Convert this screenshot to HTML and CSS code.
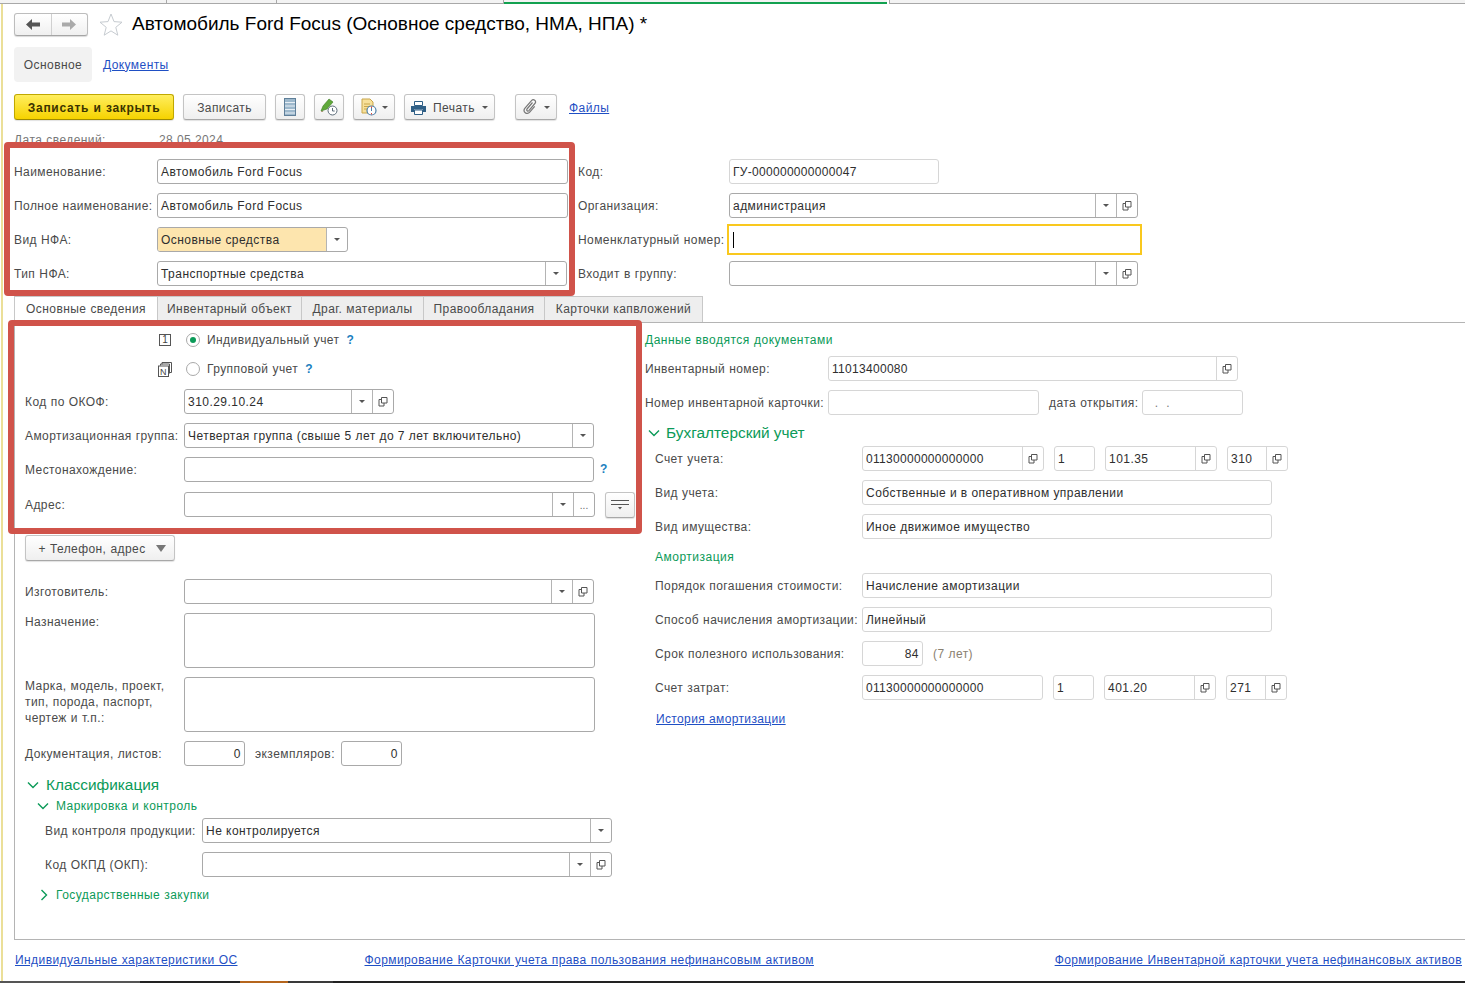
FILE: index.html
```html
<!DOCTYPE html>
<html>
<head>
    <meta charset="UTF-8">
    <title>Автомобиль Ford Focus</title>
    <link rel="stylesheet" href="styles.css">
</head>
<body>
    <svg class="defs" width="0" height="0">
        <symbol id="open" viewBox="0 0 10 10">
            <path d="M3.5 .5h5.500v5.500h-5.500z M3.500 2.500H1v6.500h5V6" fill="none" stroke="#555" stroke-width="1"/>
        </symbol>
        <symbol id="chev-down" viewBox="0 0 12 8">
            <path d="M1 1.500l5 5 5-5" fill="none" stroke="#0b9a58" stroke-width="1.400"/>
        </symbol>
        <symbol id="chev-right" viewBox="0 0 8 12">
            <path d="M1.500 1l5 5-5 5" fill="none" stroke="#0b9a58" stroke-width="1.400"/>
        </symbol>
    </svg>

    <div class="top-strip">
        <span class="strip-seg s1"></span>
        <span class="strip-seg s2"></span>
        <span class="strip-seg s3"></span>
        <span class="strip-seg s4"></span>
    </div>

    <div class="page">
        <div class="head">
            <div class="nav-btns">
                <span class="nav-btn">
                    <svg width="14" height="11" viewBox="0 0 14 11"><path d="M6 0v3.500h8v4H6V11L0 5.500z" fill="#555"/></svg>
                </span>
                <span class="nav-btn">
                    <svg width="14" height="11" viewBox="0 0 14 11"><path d="M8 0v3.500H0v4h8V11l6-5.500z" fill="#aaa"/></svg>
                </span>
            </div>
            <svg class="star" width="24" height="23" viewBox="0 0 24 23"><path d="M12 1l3 7.600 8 .6-6.200 5.100 2 7.900L12 17.900l-6.800 4.300 2-7.900L1 9.200l8-.6z" fill="#fff" stroke="#c6cbd0"/></svg>
            <h1>Автомобиль Ford Focus (Основное средство, НМА, НПА) *</h1>
        </div>

        <div class="sections">
            <span class="section-current">Основное</span>
            <a class="link">Документы</a>
        </div>

        <div class="toolbar">
            <button class="btn btn-main">Записать и закрыть</button>
            <button class="btn btn-write">Записать</button>
            <button class="btn btn-icon">
                <svg width="12" height="18" viewBox="0 0 12 18"><rect x=".5" y=".5" width="11" height="17" fill="#9db8cc" stroke="#5f7f99"/><path d="M1 4.500h10M1 8h10M1 11.500h10M1 15h10" stroke="#e8eff5" stroke-width="1"/></svg>
            </button>
            <button class="btn btn-icon">
                <svg width="18" height="18" viewBox="0 0 18 18"><path d="M1 13l2-5 6-7 4 3-6 7z" fill="#5fa83a" stroke="#3d7a22" stroke-width=".6"/><path d="M1 13l1 1 1.500-1" fill="#8a6a3a"/><circle cx="12.500" cy="12.500" r="4.500" fill="#fff" stroke="#5b6b78"/><path d="M12.500 10v3h2.200" fill="none" stroke="#5b6b78"/></svg>
            </button>
            <button class="btn btn-drop">
                <svg width="16" height="18" viewBox="0 0 16 18"><path d="M1 1h8l3 3v11H1z" fill="#f7e09a" stroke="#c9a64a"/><path d="M3 6h6M3 8.500h5M3 11h4" stroke="#c9a64a"/><circle cx="10.500" cy="12.500" r="4.500" fill="#fff" stroke="#4d7fa8" stroke-width="1.200"/><path d="M10.500 8.500v1.500M10.500 15v1.500" stroke="#d8463c"/><path d="M10.500 10v3" stroke="#4d7fa8"/></svg>
                <span class="arrow"></span>
            </button>
            <button class="btn btn-print">
                <svg width="15" height="14" viewBox="0 0 15 14"><path d="M3.500 .5h8v4h-8z" fill="#fff" stroke="#2f5f86"/><path d="M0 5h15v6h-3V8.500H3V11H0z" fill="#2f5f86"/><path d="M3.500 9h8v4.500h-8z" fill="#fff" stroke="#2f5f86"/></svg>
                <span>Печать</span>
                <span class="arrow"></span>
            </button>
            <button class="btn btn-clip">
                <svg width="14" height="16" viewBox="0 0 14 16"><path d="M9.500 3.500L4 10c-1 1.300 .8 2.800 1.900 1.600l6-7.100c2-2.400-1.400-5.200-3.400-2.900L2 9.200c-2.800 3.300 1.900 7.300 4.700 4l5-5.900" fill="none" stroke="#777" stroke-width="1.200"/></svg>
                <span class="arrow"></span>
            </button>
            <a class="link files-link">Файлы</a>
        </div>

        <div class="date-row">
            <span class="date-label">Дата сведений:</span>
            <span>28.05.2024</span>
        </div>

        <div class="top-form">
            <div class="form-col col-main">
                <div class="row">
                    <span class="label">Наименование:</span>
                    <div class="field w-411"><span class="val">Автомобиль Ford Focus</span></div>
                </div>
                <div class="row">
                    <span class="label">Полное наименование:</span>
                    <div class="field w-411"><span class="val">Автомобиль Ford Focus</span></div>
                </div>
                <div class="row">
                    <span class="label">Вид НФА:</span>
                    <div class="field w-191"><span class="val val-mark">Основные средства</span><span class="fbtn"><i class="arrow"></i></span></div>
                </div>
                <div class="row">
                    <span class="label">Тип НФА:</span>
                    <div class="field w-410"><span class="val">Транспортные средства</span><span class="fbtn"><i class="arrow"></i></span></div>
                </div>
            </div>
            <div class="form-col col-org">
                <div class="row">
                    <span class="label">Код:</span>
                    <div class="field field-ro w-210"><span class="val val-digits">ГУ-000000000000047</span></div>
                </div>
                <div class="row">
                    <span class="label">Организация:</span>
                    <div class="field w-409"><span class="val">администрация</span><span class="fbtn"><i class="arrow"></i></span><span class="fbtn"><svg class="ico-open"><use href="#open"/></svg></span></div>
                </div>
                <div class="row">
                    <span class="label">Номенклатурный номер:</span>
                    <div class="field field-focus"><span class="caret"></span></div>
                </div>
                <div class="row">
                    <span class="label">Входит в группу:</span>
                    <div class="field w-409"><span class="val"></span><span class="fbtn"><i class="arrow"></i></span><span class="fbtn"><svg class="ico-open"><use href="#open"/></svg></span></div>
                </div>
            </div>
        </div>

        <div class="tabs">
            <span class="tab tab-active t1">Основные сведения</span>
            <span class="tab t2">Инвентарный объект</span>
            <span class="tab t3">Драг. материалы</span>
            <span class="tab t4">Правообладания</span>
            <span class="tab t5">Карточки капвложений</span>
        </div>

        <div class="panel">
            <div class="panel-left">
                <div class="row row-radio">
                    <span class="mode-ico"><span class="box-one">1</span></span>
                    <span class="radio radio-on"></span>
                    <span class="radio-text">Индивидуальный учет</span>
                    <span class="hint hint-one">?</span>
                </div>
                <div class="row row-radio">
                    <span class="mode-ico">
                        <svg class="ico-group" width="14" height="15" viewBox="0 0 14 15"><path d="M4 2.500V.5h9.500v10h-1.500M2.500 3.500V2h9v9.500" fill="none" stroke="#555"/><rect x=".5" y="4" width="10" height="10.500" fill="#fff" stroke="#555"/><text x="5.500" y="12.500" font-size="9" text-anchor="middle" fill="#444" font-family="Liberation Sans, sans-serif">N</text></svg>
                    </span>
                    <span class="radio"></span>
                    <span class="radio-text">Групповой учет</span>
                    <span class="hint">?</span>
                </div>
                <div class="row row-okof">
                    <span class="label">Код по ОКОФ:</span>
                    <div class="field w-210"><span class="val">310.29.10.24</span><span class="fbtn"><i class="arrow"></i></span><span class="fbtn"><svg class="ico-open"><use href="#open"/></svg></span></div>
                </div>
                <div class="row">
                    <span class="label">Амортизационная группа:</span>
                    <div class="field w-410"><span class="val">Четвертая группа (свыше 5 лет до 7 лет включительно)</span><span class="fbtn"><i class="arrow"></i></span></div>
                </div>
                <div class="row">
                    <span class="label">Местонахождение:</span>
                    <div class="field w-410"><span class="val"></span></div>
                    <span class="hint hint-place">?</span>
                </div>
                <div class="row row-address">
                    <span class="label">Адрес:</span>
                    <div class="field w-411"><span class="val"></span><span class="fbtn"><i class="arrow"></i></span><span class="fbtn fbtn-dots">...</span></div>
                    <button class="btn btn-filter">
                        <svg width="18" height="11" viewBox="0 0 18 11"><path d="M0 1.500h18M0 5.500h18" stroke="#555"/><path d="M7 8h4L9 10.500z" fill="#555"/></svg>
                    </button>
                </div>
                <button class="btn btn-phone">+ Телефон, адрес<span class="arrow arrow-big"></span></button>
                <div class="row row-maker">
                    <span class="label">Изготовитель:</span>
                    <div class="field w-410"><span class="val"></span><span class="fbtn"><i class="arrow"></i></span><span class="fbtn"><svg class="ico-open"><use href="#open"/></svg></span></div>
                </div>
                <div class="row row-text">
                    <span class="label label-top">Назначение:</span>
                    <div class="field field-area w-411"></div>
                </div>
                <div class="row row-text">
                    <span class="label label-top">Марка, модель, проект,<br>тип, порода, паспорт,<br>чертеж и т.п.:</span>
                    <div class="field field-area w-411"></div>
                </div>
                <div class="row">
                    <span class="label">Документация, листов:</span>
                    <div class="field w-61"><span class="val val-num">0</span></div>
                    <span class="label-inline">экземпляров:</span>
                    <div class="field w-61"><span class="val val-num">0</span></div>
                </div>
                <div class="group-head group-big">
                    <svg class="chev" width="12" height="8"><use href="#chev-down"/></svg>
                    <span>Классификация</span>
                </div>
                <div class="sub-group">
                    <div class="group-head">
                        <svg class="chev" width="12" height="8"><use href="#chev-down"/></svg>
                        <span>Маркировка и контроль</span>
                    </div>
                    <div class="row row-sub">
                        <span class="label label-sub">Вид контроля продукции:</span>
                        <div class="field w-410"><span class="val">Не контролируется</span><span class="fbtn"><i class="arrow"></i></span></div>
                    </div>
                    <div class="row row-sub">
                        <span class="label label-sub">Код ОКПД (ОКП):</span>
                        <div class="field w-410"><span class="val"></span><span class="fbtn"><i class="arrow"></i></span><span class="fbtn"><svg class="ico-open"><use href="#open"/></svg></span></div>
                    </div>
                    <div class="group-head">
                        <svg class="chev-r" width="8" height="12"><use href="#chev-right"/></svg>
                        <span>Государственные закупки</span>
                    </div>
                </div>
            </div>

            <div class="panel-right">
                <div class="green-note">Данные вводятся документами</div>
                <div class="row">
                    <span class="label label-wide">Инвентарный номер:</span>
                    <div class="field field-ro w-410"><span class="val val-digits">11013400080</span><span class="fbtn"><svg class="ico-open"><use href="#open"/></svg></span></div>
                </div>
                <div class="row">
                    <span class="label label-wide">Номер инвентарной карточки:</span>
                    <div class="field field-ro w-211"></div>
                    <span class="label-date">дата открытия:</span>
                    <div class="field field-ro w-101"><span class="val val-date">&nbsp;.&nbsp;&nbsp;.</span></div>
                </div>
                <div class="group-head group-big group-acc">
                    <svg class="chev" width="12" height="8"><use href="#chev-down"/></svg>
                    <span>Бухгалтерский учет</span>
                </div>
                <div class="acc-rows">
                    <div class="row">
                        <span class="label label-acc">Счет учета:</span>
                        <div class="accounts">
                            <div class="field field-ro w-182"><span class="val val-digits">01130000000000000</span><span class="fbtn"><svg class="ico-open"><use href="#open"/></svg></span></div>
                            <div class="field field-ro w-41"><span class="val">1</span></div>
                            <div class="field field-ro w-112"><span class="val">101.35</span><span class="fbtn"><svg class="ico-open"><use href="#open"/></svg></span></div>
                            <div class="field field-ro w-61"><span class="val">310</span><span class="fbtn"><svg class="ico-open"><use href="#open"/></svg></span></div>
                        </div>
                    </div>
                    <div class="row">
                        <span class="label label-acc">Вид учета:</span>
                        <div class="field field-ro w-410"><span class="val">Собственные и в оперативном управлении</span></div>
                    </div>
                    <div class="row">
                        <span class="label label-acc">Вид имущества:</span>
                        <div class="field field-ro w-410"><span class="val">Иное движимое имущество</span></div>
                    </div>
                    <div class="green-note green-sub">Амортизация</div>
                    <div class="row">
                        <span class="label label-acc">Порядок погашения стоимости:</span>
                        <div class="field field-ro w-410"><span class="val">Начисление амортизации</span></div>
                    </div>
                    <div class="row">
                        <span class="label label-acc">Способ начисления амортизации:</span>
                        <div class="field field-ro w-410"><span class="val">Линейный</span></div>
                    </div>
                    <div class="row">
                        <span class="label label-acc">Срок полезного использования:</span>
                        <div class="field field-ro w-61"><span class="val val-num">84</span></div>
                        <span class="years">(7 лет)</span>
                    </div>
                    <div class="row">
                        <span class="label label-acc">Счет затрат:</span>
                        <div class="accounts">
                            <div class="field field-ro w-181"><span class="val val-digits">01130000000000000</span></div>
                            <div class="field field-ro w-41"><span class="val">1</span></div>
                            <div class="field field-ro w-112"><span class="val">401.20</span><span class="fbtn"><svg class="ico-open"><use href="#open"/></svg></span></div>
                            <div class="field field-ro w-61"><span class="val">271</span><span class="fbtn"><svg class="ico-open"><use href="#open"/></svg></span></div>
                        </div>
                    </div>
                    <a class="link history-link">История амортизации</a>
                </div>
            </div>
        </div>

        <div class="footer">
            <a class="link">Индивидуальные характеристики ОС</a>
            <a class="link link-card">Формирование Карточки учета права пользования нефинансовым активом</a>
            <a class="link link-inv">Формирование Инвентарной карточки учета нефинансовых активов</a>
        </div>

        <div class="mark mark-top"></div>
        <div class="mark mark-tab"></div>
    </div>

    <div class="bottom-strip">
        <span class="bs1"></span>
        <span class="bs2"></span>
        <span class="bs3"></span>
        <span class="bs4"></span>
        <span class="bs5"></span>
    </div>
</body>
</html>
```

FILE: styles.css
```css
* {
    box-sizing: border-box;
}
html, body {
    margin: 0;
    height: 983px;
    overflow: hidden;
}
body {
    font-family: "Liberation Sans", Arial, sans-serif;
    font-size: 12px;
    letter-spacing: .42px;
    word-spacing: .3px;
    color: #4a4a4a;
    background-color: #fff;
    display: flex;
    flex-direction: column;
}
.defs {
    position: absolute;
}

/* polosa sverhu */
.top-strip {
    height: 4px;
    display: flex;
    background-color: #f3f3f3;
    border-bottom: 1px solid #a8a8a8;
    flex: none;
}
.strip-seg {
    display: block;
    border-right: 1px solid #a8a8a8;
}
.s1 { width: 167px; }
.s2 { width: 110px; }
.s3 { width: 227px; }
.s4 {
    width: 386px;
    margin-bottom: -1px;
    box-shadow: inset -2px 0 0 #fff, inset 0 -2px 0 #12a150;
}

.page {
    position: relative;
    flex: 1;
    margin-left: 1px;
    border-left: 2px solid #ebdf98;
    padding-left: 11px;
    display: flex;
    flex-direction: column;
}

/* zagolovok */
.head {
    display: flex;
    align-items: center;
    height: 23px;
    margin-top: 9px;
}
.nav-btns {
    display: flex;
    width: 74px;
    height: 23px;
    border: 1px solid #bdbdbd;
    border-bottom-color: #a5a5a5;
    border-radius: 3px;
    background: linear-gradient(#fff, #f0f0f0);
    box-shadow: 0 1px 1px rgba(0,0,0,0.15);
}
.nav-btn {
    flex: 1;
    display: flex;
    align-items: center;
    justify-content: center;
}
.nav-btn + .nav-btn {
    border-left: 1px solid #d0d0d0;
}
.star {
    margin-left: 11px;
}
h1 {
    margin: 0 0 2px 9px;
    font-size: 19px;
    font-weight: normal;
    letter-spacing: 0;
    word-spacing: 0;
    color: #000;
    white-space: nowrap;
}

.sections {
    display: flex;
    align-items: center;
    height: 35px;
    margin-top: 11px;
}
.section-current {
    width: 78px;
    height: 35px;
    line-height: 36px;
    text-align: center;
    background-color: #f2f2f2;
    border-radius: 4px;
    margin-right: 11px;
}
.link {
    color: #1f4fc4;
    text-decoration: underline;
    white-space: nowrap;
}

/* knopki */
.toolbar {
    display: flex;
    align-items: center;
    height: 26px;
    margin-top: 12px;
}
.btn {
    display: flex;
    align-items: center;
    justify-content: center;
    height: 26px;
    padding: 1px 0 0;
    font: inherit;
    letter-spacing: inherit;
    word-spacing: inherit;
    color: #4a4a4a;
    border: 1px solid #c4c4c4;
    border-bottom-color: #a8a8a8;
    border-radius: 3px;
    background: linear-gradient(#fff, #efefef);
    box-shadow: 0 1px 1px rgba(0,0,0,0.12);
}
.btn-main {
    width: 160px;
    font-weight: bold;
    letter-spacing: .72px;
    color: #3a3300;
    background: linear-gradient(#ffee5e, #f6d300);
    border-color: #c0a800;
    border-bottom-color: #a08c00;
}
.btn-write {
    width: 83px;
    margin-left: 9px;
}
.btn-icon {
    width: 30px;
    margin-left: 9px;
    padding-top: 0;
}
.btn-drop {
    width: 42px;
    margin-left: 9px;
    gap: 5px;
    padding-top: 0;
}
.btn-print {
    width: 91px;
    margin-left: 9px;
    gap: 7px;
}
.btn-clip {
    width: 42px;
    margin-left: 20px;
    gap: 7px;
    padding-top: 0;
}
.files-link {
    margin-left: 12px;
    margin-top: 1px;
}
.arrow {
    display: block;
    width: 0;
    height: 0;
    border-left: 3px solid transparent;
    border-right: 3px solid transparent;
    border-top: 3px solid #555;
}
.arrow-big {
    border-left-width: 5px;
    border-right-width: 5px;
    border-top-width: 7px;
    border-top-color: #777;
    margin-left: 10px;
}

.date-row {
    display: flex;
    height: 14px;
    margin-top: 13px;
    line-height: 14px;
    color: #777;
}
.date-label {
    width: 145px;
}

/* strochki formy */
.top-form {
    display: flex;
    gap: 10px;
    margin-top: 12px;
}
.form-col {
    display: flex;
    flex-direction: column;
    gap: 9px;
}
.col-main {
    width: 554px;
}
.row {
    display: flex;
    align-items: center;
    height: 25px;
    white-space: nowrap;
}
.label {
    flex: none;
    width: 159px;
}
.col-main .label {
    width: 143px;
}
.col-org .label {
    width: 151px;
}
.label-wide {
    width: 183px;
}
.label-acc {
    width: 207px;
}
.label-sub {
    width: 157px;
}
.label-top {
    align-self: flex-start;
    line-height: 16px;
}
.label-inline {
    width: 96px;
    padding-left: 10px;
}
.label-date {
    width: 103px;
    padding-left: 10px;
}

.field {
    flex: none;
    display: flex;
    height: 25px;
    border: 1px solid #a9a9a9;
    border-radius: 3px;
    background-color: #fff;
    color: #2e2e2e;
    overflow: hidden;
}
.field-ro {
    border-color: #d6d6d6;
}
.val {
    flex: 1;
    min-width: 0;
    padding: 0 3px;
    line-height: 24px;
    letter-spacing: .46px;
    word-spacing: 0;
    white-space: nowrap;
}
.val-mark {
    background-color: #fde5ae;
}
.val-num {
    text-align: right;
}
.val-digits {
    letter-spacing: .3px;
}
.val-date {
    color: #777;
    padding-left: 8px;
}
.fbtn {
    flex: none;
    width: 21px;
    display: flex;
    align-items: center;
    justify-content: center;
    border-left: 1px solid #b4b4b4;
}
.field-ro .fbtn {
    border-left-color: #d6d6d6;
}
.fbtn-dots {
    align-items: flex-end;
    padding-bottom: 5px;
    font-size: 10px;
    letter-spacing: 0;
    color: #666;
}
.ico-open {
    width: 10px;
    height: 10px;
}
.w-41 { width: 41px; }
.w-61 { width: 61px; }
.w-101 { width: 101px; }
.w-112 { width: 112px; }
.w-181 { width: 181px; }
.w-182 { width: 182px; }
.w-191 { width: 191px; }
.w-210 { width: 210px; }
.w-211 { width: 211px; }
.w-409 { width: 409px; }
.w-410 { width: 410px; }
.w-411 { width: 411px; }

.field-focus {
    width: 415px;
    height: 31px;
    margin: -3px 0 -3px -2px;
    border: 2px solid #f9c81e;
    border-radius: 0;
    align-items: center;
    padding-left: 4px;
}
.caret {
    width: 1px;
    height: 16px;
    background-color: #000;
}

/* vkladki */
.tabs {
    display: flex;
    height: 26px;
    margin-top: 10px;
    width: 689px;
}
.tab {
    height: 26px;
    line-height: 25px;
    text-align: center;
    background-color: #eeeeee;
    border: 1px solid #c8c8c8;
    border-left: none;
    border-bottom: none;
    white-space: nowrap;
}
.tab-active {
    background-color: #fff;
    border-left: 1px solid #c8c8c8;
}
.t1 { width: 144px; }
.t2 { width: 144px; }
.t3 { width: 122px; }
.t4 { width: 121px; }
.t5 { width: 158px; }

.panel {
    display: flex;
    height: 618px;
    border: 1px solid #b4b4b4;
    border-right: none;
    padding-left: 10px;
    gap: 10px;
}
.panel-left {
    width: 610px;
    display: flex;
    flex-direction: column;
    gap: 9px;
    padding-top: 7px;
}
.panel-right {
    flex: 1;
    display: flex;
    flex-direction: column;
    gap: 9px;
    padding-top: 8px;
}

.row-radio {
    height: 20px;
}
.mode-ico {
    width: 159px;
    display: flex;
    justify-content: flex-end;
    padding-right: 13px;
}
.ico-group {
    margin-right: -1px;
}
.box-one {
    width: 12px;
    height: 12px;
    border: 1px solid #555;
    font-size: 10px;
    line-height: 10px;
    text-align: center;
    letter-spacing: 0;
    color: #444;
}
.radio {
    width: 14px;
    height: 14px;
    margin-left: 2px;
    border: 1px solid #a9a9a9;
    border-radius: 50%;
    position: relative;
}
.radio-on::after {
    content: "";
    position: absolute;
    left: 3px;
    top: 3px;
    width: 6px;
    height: 6px;
    border-radius: 50%;
    background-color: #0b9a58;
}
.radio-text {
    margin-left: 7px;
}
.hint {
    margin-left: 7px;
    font-weight: bold;
    color: #1c7fc0;
}
.hint-place {
    margin-left: 6px;
    margin-top: -1px;
}
.row-okof {
    margin-top: 1px;
}
.row-address {
    margin-top: 1px;
}
.btn-filter {
    width: 30px;
    margin-left: 10px;
    padding-top: 0;
}
.btn-phone {
    flex: none;
    width: 150px;
    margin-top: 9px;
    margin-bottom: 9px;
    padding-left: 4px;
}
.row-text {
    height: 55px;
}
.field-area {
    height: 55px;
}
.row-text .label-top {
    padding-top: 1px;
}

.group-head {
    display: flex;
    align-items: center;
    height: 18px;
    letter-spacing: .46px;
    color: #0b9a58;
    white-space: nowrap;
}
.group-big {
    height: 20px;
    margin-left: 2px;
    font-size: 15.4px;
    letter-spacing: 0;
    word-spacing: 0;
}
.chev {
    margin-right: 7px;
}
.chev-r {
    margin: 0 8px 0 3px;
}
.sub-group {
    display: flex;
    flex-direction: column;
    gap: 9px;
    margin-top: -7px;
    padding-left: 12px;
}
.sub-group .group-head + .row {
    margin-top: -6px;
}
.row-sub {
    padding-left: 8px;
}

.green-note {
    height: 18px;
    line-height: 18px;
    letter-spacing: .5px;
    color: #0b9a58;
    margin-bottom: -2px;
}
.group-acc {
    height: 18px;
    margin: 0 0 -5px 3px;
}
.group-acc .chev {
    margin-right: 6px;
}
.acc-rows {
    display: flex;
    flex-direction: column;
    gap: 9px;
    padding-left: 10px;
}
.accounts {
    display: flex;
    gap: 10px;
}
.green-sub {
    height: 16px;
    margin-bottom: 0;
}
.years {
    margin-left: 10px;
    color: #8a8170;
}
.history-link {
    height: 18px;
    line-height: 20px;
    margin-left: 1px;
    letter-spacing: .36px;
}

/* nizhnie ssylki */
.footer {
    display: flex;
    padding: 13px 3px 0 1px;
    letter-spacing: .42px;
    word-spacing: .4px;
    line-height: 15px;
}
.link-card {
    margin-left: 127px;
}
.link-inv {
    margin-left: auto;
}

/* krasnye ramki */
.mark {
    position: absolute;
    border: 6px solid #d0534a;
    border-radius: 4px;
    pointer-events: none;
}
.mark-top {
    left: 1px;
    top: 138px;
    width: 571px;
    height: 154px;
}
.mark-tab {
    left: 5px;
    top: 316px;
    width: 634px;
    height: 214px;
}

.bottom-strip {
    flex: none;
    height: 2px;
    display: flex;
    background-color: #222;
}
.bottom-strip span {
    display: block;
    height: 2px;
}
.bs1 { width: 140px; background-color: #555; }
.bs2 { width: 100px; background-color: #222; }
.bs3 { width: 48px; background-color: #b5651d; }
.bs4 { width: 45px; background-color: #3a3a3a; }
.bs5 { width: 100px; background-color: #222; }
```
